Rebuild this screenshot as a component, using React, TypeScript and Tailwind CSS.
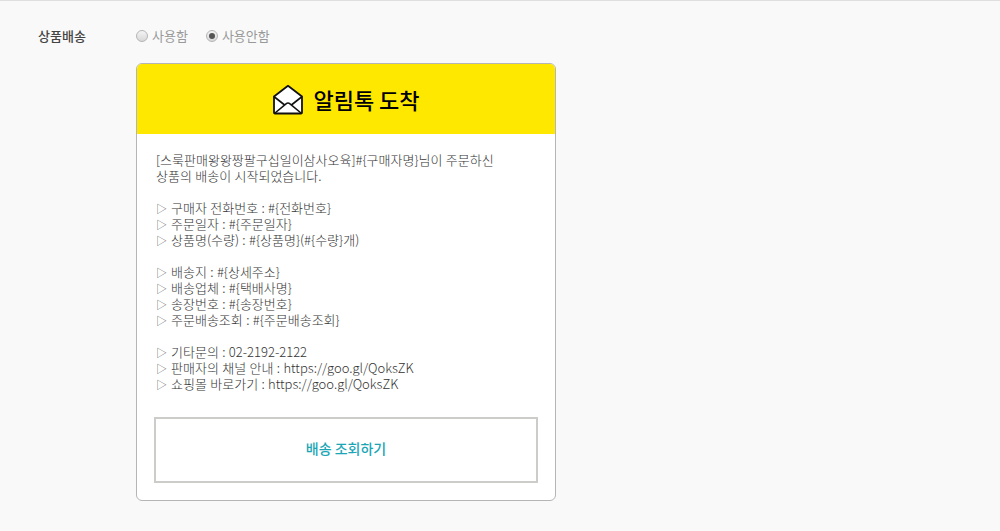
import React from "react";

const LINES = [
  "[스룩판매왕왕짱팔구십일이삼사오육]#{구매자명}님이 주문하신",
  "상품의 배송이 시작되었습니다.",
  "",
  "구매자 전화번호 : #{전화번호}",
  "주문일자 : #{주문일자}",
  "상품명(수량) : #{상품명}(#{수량}개)",
  "",
  "배송지 : #{상세주소}",
  "배송업체 : #{택배사명}",
  "송장번호 : #{송장번호}",
  "주문배송조회 : #{주문배송조회}",
  "",
  "기타문의 : 02-2192-2122",
  "판매자의 채널 안내 : https://goo.gl/QoksZK",
  "쇼핑몰 바로가기 : https://goo.gl/QoksZK",
];

function Radio({ label, checked }: { label: string; checked?: boolean }) {
  return (
    <label className="flex items-center gap-[4px]">
      <span className="w-[12px] h-[12px] rounded-full border border-[#b5b5b5] bg-gradient-to-b from-[#f4f4f4] to-[#d8d8d8] grid place-items-center">
        {checked && <span className="w-[6px] h-[6px] rounded-full bg-[#555]" />}
      </span>
      <span>{label}</span>
    </label>
  );
}

function EnvelopeIcon() {
  return (
    <svg className="ml-[1px]" width="30" height="32" viewBox="0 0 30 32" fill="none" aria-hidden="true">
      <path
        d="M1 13.5 L15 2.8 L29 13.5 V29.5 a1 1 0 0 1 -1 1 H2 a1 1 0 0 1 -1 -1 Z"
        fill="#fff"
        stroke="#111"
        strokeWidth="1.8"
        strokeLinejoin="round"
      />
      <path
        d="M1.5 14 L11 21.5 M28.5 14 L19 21.5 M2 30 L13 20.8 Q15 19.3 17 20.8 L28 30"
        stroke="#111"
        strokeWidth="1.6"
        strokeLinecap="round"
      />
    </svg>
  );
}

export default function App() {
  return (
    <div className="min-h-[531px] bg-[#f9f9f9] border-t border-[#dfdfdf] font-['Noto_Sans_CJK_KR',sans-serif]">
      <div className="flex pl-[38px] pt-[26px]">
        <div className="w-[98px] text-[13px] leading-[17px] font-medium text-[#444]">상품배송</div>
        <div>
          <div className="flex gap-[18px] text-[13px] leading-[17px] text-[#999]">
            <Radio label="사용함" />
            <Radio label="사용안함" checked />
          </div>
          <div className="mt-[19px] w-[420px] h-[438px] flex flex-col rounded-[6px] border border-[#b5b5b5] bg-white overflow-hidden">
            <div className="h-[70px] shrink-0 bg-[#ffe800] flex items-center justify-center gap-[10px]">
              <EnvelopeIcon />
              <span className="text-[22px] leading-[30px] font-medium text-black">알림톡 도착</span>
            </div>
            <div className="px-[19px] pt-[18px] text-[13px] leading-[16px] font-light text-[#333] [word-spacing:0.5px]">
              {LINES.map((line, i) => (
                <div key={i} className="h-[16px] whitespace-pre flex">
                  {line !== "" && i > 2 && <span className="w-[15px] text-[11px] text-[#555]">▷</span>}
                  <span>{line}</span>
                </div>
              ))}
            </div>
            <div className="mt-[25px] mx-[17px] h-[66px] pb-[3px] border-2 border-[#cccdc8] flex items-center justify-center text-[14px] font-medium text-[#1ba6b6]">
              배송 조회하기
            </div>
          </div>
        </div>
      </div>
    </div>
  );
}
